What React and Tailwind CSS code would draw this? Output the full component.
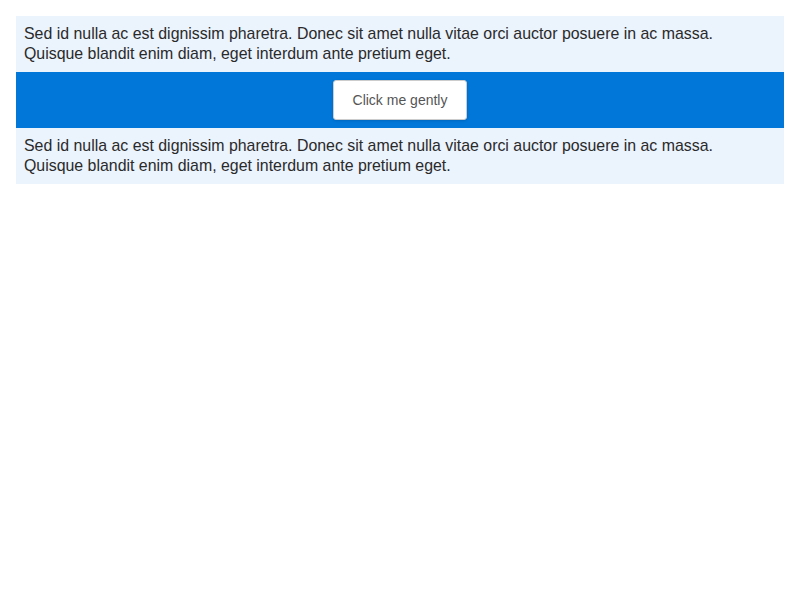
export default function App() {
  const text =
    'Sed id nulla ac est dignissim pharetra. Donec sit amet nulla vitae orci auctor posuere in ac massa. Quisque blandit enim diam, eget interdum ante pretium eget.'
  return (
    <div className="m-4 font-['Liberation_Sans',Arial,sans-serif] text-[15.9px] leading-5 text-[#2a2a2a]">
      <div className="bg-[#ebf3fd] p-2">{text}</div>
      <div className="flex justify-center bg-[#0077d9] p-2">
        <button className="h-10 rounded-[3px] border border-[#ccc] bg-white px-[19px] text-sm text-[#555] shadow-sm">
          Click me gently
        </button>
      </div>
      <div className="bg-[#ebf3fd] p-2">{text}</div>
    </div>
  )
}
